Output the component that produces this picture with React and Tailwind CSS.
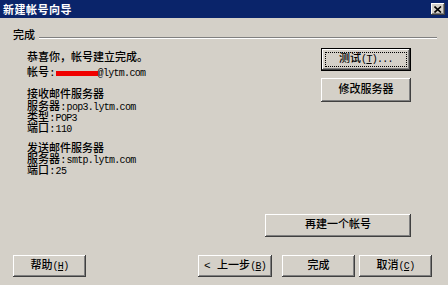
import React from "react";

const CJK = "font-['Liberation_Mono','Noto_Sans_CJK_SC',monospace]";

function Btn({ className = "", children }) {
  return (
    <div
      className={`flex items-center justify-center bg-[#d4d0c8] text-[11px] leading-[11px] text-black shadow-[inset_-1px_-1px_0_#404040,inset_1px_1px_0_#ffffff,inset_-2px_-2px_0_#808080,inset_2px_2px_0_#d4d0c8] ${className}`}
    >
      {children}
    </div>
  );
}

function L({ children }) {
  return <span className="text-[10px] tracking-[-0.7px]">{children}</span>;
}

export default function App() {
  return (
    <div className={`w-[448px] h-[285px] bg-[#d4d0c8] flex flex-col overflow-hidden text-black font-medium ${CJK}`}>
      {/* title bar */}
      <div className="h-[18px] bg-[#0a246a] flex items-center justify-between pl-[3px] pr-[3px]">
        <span className="text-white font-bold text-[11px] leading-[11px] tracking-[0.5px] font-['Noto_Sans_CJK_SC',sans-serif]">
          新建帐号向导
        </span>
        <div className="w-[14px] h-[12px] flex items-center justify-center bg-[#d4d0c8] shadow-[inset_-1px_-1px_0_#404040,inset_1px_1px_0_#ffffff,inset_-2px_-2px_0_#808080]">
          <svg width="8" height="7" viewBox="0 0 8 7">
            <path d="M0.5 0.5 L7 6.5 M7 0.5 L0.5 6.5" stroke="#000" strokeWidth="1.6" />
          </svg>
        </div>
      </div>

      {/* body */}
      <div className="flex-1 flex flex-col pl-[13px] pr-[11px] pt-[13px] pb-[8px]">
        <div className="flex items-center h-[11px]">
          <span className="text-[11px] leading-[11px]">完成</span>
          <div className="flex-1 ml-[4px] border-t border-t-[#808080] border-b border-b-white mt-[2px]" />
        </div>

        <div className="flex mt-[6px]">
          <div className="pl-[14px] pt-[5px] flex flex-col text-[11px] leading-[11px]">
            <div>恭喜你，帐号建立完成。</div>
            <div className="mt-[4px] flex items-center">
              <span>帐号:</span>
              <span className="inline-block w-[42px] h-[5px] bg-[#f00000] -mt-[1px]" />
              <L>@lytm.com</L>
            </div>
            <div className="mt-[11px]">接收邮件服务器</div>
            <div className="mt-[1px]">服务器:<L>pop3.lytm.com</L></div>
            <div>类型:<L>POP3</L></div>
            <div>端口:<L>110</L></div>
            <div className="mt-[9px]">发送邮件服务器</div>
            <div>服务器:<L>smtp.lytm.com</L></div>
            <div>端口:<L>25</L></div>
          </div>

          <div className="ml-auto mr-[26px] flex flex-col gap-[7px]">
            <div className="w-[90px] h-[23px] border border-black flex">
              <Btn className="flex-1 p-[3px]">
                <div className="self-stretch flex-1 border border-dotted border-black flex items-center justify-center">
                  测试<L>(<u>T</u>)...</L>
                </div>
              </Btn>
            </div>
            <Btn className="w-[90px] h-[24px]">修改服务器</Btn>
          </div>
        </div>

        <div className="flex-1" />

        <div className="flex justify-end pr-[26px]">
          <Btn className="w-[146px] h-[23px]">再建一个帐号</Btn>
        </div>

        <div className="flex mt-[18px] h-[22px]">
          <Btn className="w-[73px]">帮助<L>(<u>H</u>)</L></Btn>
          <Btn className="w-[74px] ml-[112px]">&lt; 上一步 <L>(<u>B</u>)</L></Btn>
          <Btn className="w-[73px] ml-[10px]">完成</Btn>
          <Btn className="w-[73px] ml-[4px]">取消<L>(<u>C</u>)</L></Btn>
        </div>
      </div>
    </div>
  );
}
